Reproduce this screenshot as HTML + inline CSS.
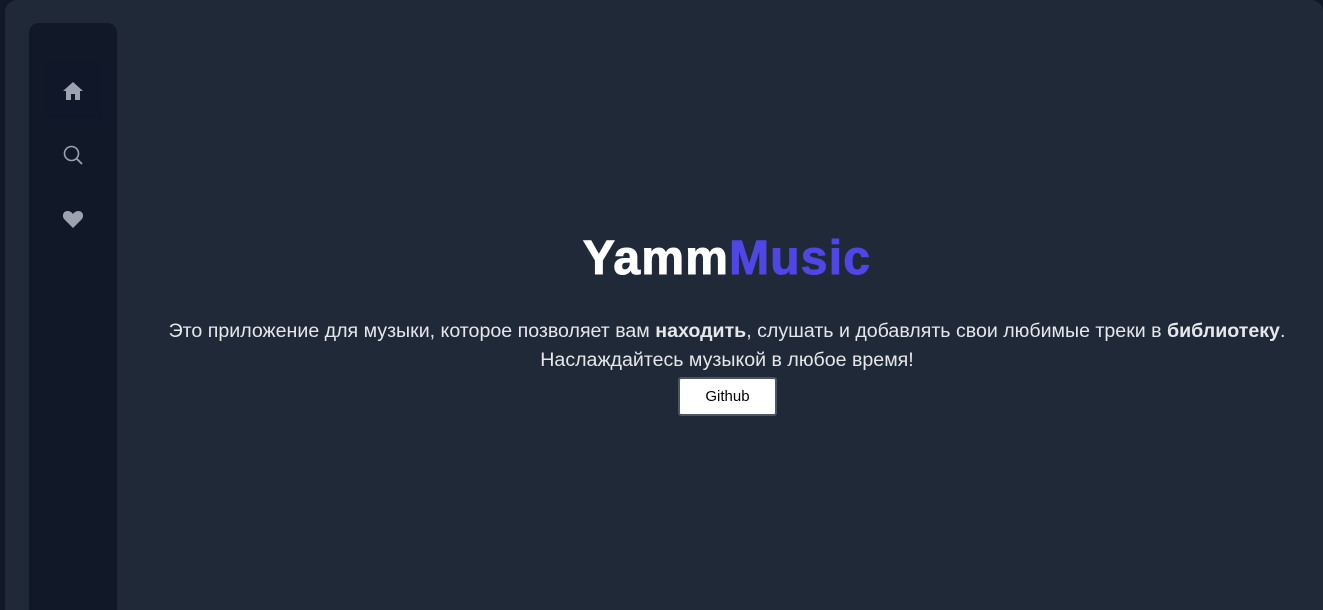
<!DOCTYPE html>
<html><head><meta charset="utf-8"><style>
*{margin:0;padding:0;box-sizing:border-box}
html,body{width:1323px;height:610px;overflow:hidden}
body{background:#111827;font-family:"Liberation Sans","DejaVu Sans",sans-serif;position:relative}
.panel{position:absolute;left:5px;top:0;width:1318px;height:610px;background:#1f2937;border-radius:12px 12px 0 0}
.side{position:absolute;left:29px;top:23px;width:88px;height:600px;background:#111827;border-radius:10px}
.hl{position:absolute;left:45px;top:62px;width:56px;height:56px;background:#0f1729}
svg{position:absolute}
.c{position:absolute;left:127px;width:1200px;text-align:center;color:#e5e7eb}
h1{position:absolute;left:127px;width:1200px;top:231px;text-align:center;font-size:48px;font-weight:900;color:#fff;letter-spacing:1.2px;-webkit-text-stroke:1px currentColor}
h1 span{color:#4f46e5}
.btn{position:absolute;left:678px;top:377px;width:99px;height:39px;background:#fff;border:2px solid #4b5563;border-radius:3px;color:#000;font-size:15px;text-align:center;line-height:35px}
</style></head><body>
<div class="panel"></div>
<div class="side"></div>
<div class="hl"></div>
<svg style="left:62px;top:80px" width="22" height="22" viewBox="0 0 22 22"><path d="M11 2 L1 11 H4 V20 H9 V14 H13 V20 H18 V11 H21 Z" fill="#9ca3af"/></svg>
<svg style="left:62px;top:144px" width="22" height="22" viewBox="0 0 22 22"><circle cx="9.5" cy="9.5" r="7" fill="none" stroke="#9ca3af" stroke-width="1.6"/><path d="M14.5 14.5 L20 20" stroke="#9ca3af" stroke-width="1.8"/></svg>
<svg style="left:62px;top:209px" width="22" height="20" viewBox="0 0 22 20"><path d="M11 19 L2.5 10.5 C-0.5 7.5 1 2 5.5 2 C8 2 10 3.5 11 5 C12 3.5 14 2 16.5 2 C21 2 22.5 7.5 19.5 10.5 Z" fill="#9ca3af"/></svg>
<h1>Yamm<span>Music</span></h1>
<div class="c" style="top:317px;font-size:19.6px;line-height:29px">Это приложение для музыки, которое позволяет вам <b>находить</b>, слушать и добавлять свои любимые треки в <b>библиотеку</b>.<br>Наслаждайтесь музыкой в любое время!</div>
<div class="btn">Github</div>
</body></html>
